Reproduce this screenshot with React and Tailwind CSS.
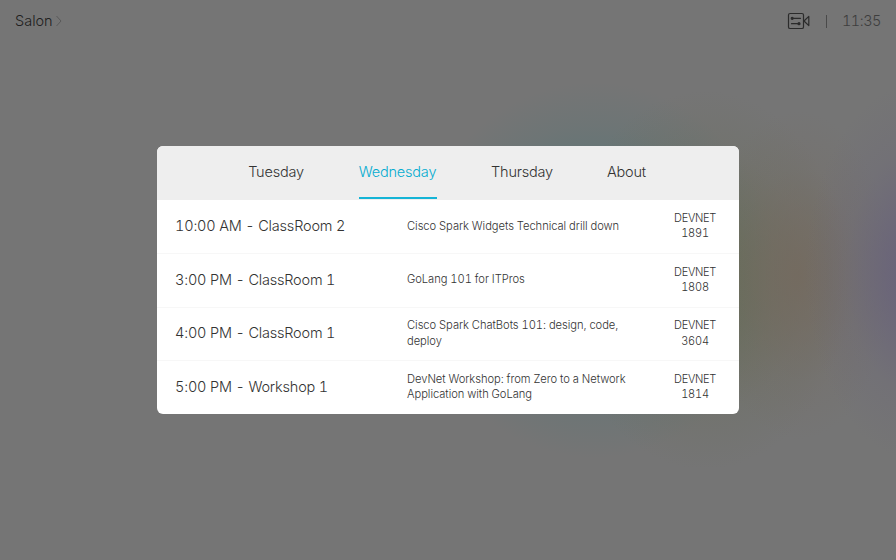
const tabs = [
  { name: "Tuesday", box: "w-[55px]" },
  { name: "Wednesday", box: "w-[78px]", active: true },
  { name: "Thursday", box: "w-[61px]" },
  { name: "About", box: "w-[38px]" },
];

const sessions = [
  { slot: "10:00 AM - ClassRoom 2", title: ["Cisco Spark Widgets Technical drill down"], code: "1891" },
  { slot: "3:00 PM - ClassRoom 1", title: ["GoLang 101 for ITPros"], code: "1808" },
  { slot: "4:00 PM - ClassRoom 1", title: ["Cisco Spark ChatBots 101: design, code,", "deploy"], code: "3604" },
  { slot: "5:00 PM - Workshop 1", title: ["DevNet Workshop: from Zero to a Network", "Application with GoLang"], code: "1814" },
];

function CameraIcon() {
  return (
    <svg className="mt-px" width="24" height="18" viewBox="0 0 24 18" fill="none" stroke="#2b2b2b" strokeWidth="1.2" strokeLinecap="round" strokeLinejoin="round">
      <rect x="1.5" y="1.5" width="15" height="15" rx="1.6" />
      <path d="M17 9 L21.8 4.4 V13.6 Z" />
      <path d="M6.5 6.3 H13.5 M4.5 11.7 H10.5" />
      <circle cx="5.2" cy="6.3" r="1" fill="#2b2b2b" />
      <circle cx="12" cy="11.7" r="1" fill="#2b2b2b" />
    </svg>
  );
}

function TopBar() {
  return (
    <header className="flex h-[41px] items-center justify-between pl-[15px] pr-[15px]">
      <div className="flex items-center text-[14.5px] text-[#202020]">
        <span>Salon</span>
        <svg className="ml-[3px] mt-px" width="6" height="12" viewBox="0 0 6 12" fill="none" stroke="#5a5a5a">
          <path d="M0.5 1 L5 6 L0.5 11" />
        </svg>
      </div>
      <div className="flex items-center">
        <CameraIcon />
        <span className="ml-[15px] mt-px h-[13px] w-px bg-[#4a4a4a]" />
        <span className="ml-[15px] mt-px w-[39px] text-[14.5px] tracking-[-0.035em] text-[#3e3e3e]">11:35</span>
      </div>
    </header>
  );
}

function Session({ slot, title, code }) {
  return (
    <li className="flex flex-1 items-center border-t border-[#f7f7f7] pl-[18px] first:border-transparent">
      <span className="w-[232px] pb-[2px] text-[14.5px] tracking-[-0.013em]">{slot}</span>
      <span className="flex w-[250px] flex-col pb-px text-[11.2px] leading-[15.4px] tracking-[-0.005em]">
        {title.map((line) => (
          <span key={line}>{line}</span>
        ))}
      </span>
      <span className="flex w-[76px] flex-col pb-px text-center text-[11px] leading-[15.4px]">
        <span className="tracking-[-0.03em]">DEVNET</span>
        <span className="tracking-[-0.02em]">{code}</span>
      </span>
    </li>
  );
}

export default function App() {
  return (
    <div className="h-[560px] w-[896px] overflow-hidden bg-[#757575] bg-[radial-gradient(ellipse_115px_190px_at_920px_272px,#67607a_0%,#67607aaa_30%,#67607a33_65%,transparent_100%),radial-gradient(ellipse_95px_165px_at_798px_275px,#74695dd0_0%,#74695d90_30%,#74695d30_65%,transparent_100%),radial-gradient(ellipse_145px_190px_at_705px_280px,#666b55_0%,#666b55a0_35%,#666b5530_70%,transparent_100%),radial-gradient(ellipse_180px_188px_at_595px_270px,#507577_0%,#507577a0_45%,#50757733_77%,transparent_100%)] font-['Inter','Liberation_Sans',sans-serif] font-light tabular-nums text-[#333333]">
      <TopBar />
      <main className="flex justify-center pt-[105px]">
        <section className="flex h-[268px] w-[582px] flex-col overflow-hidden rounded-md bg-white">
          <nav className="flex h-[53.5px] gap-[55px] bg-[#eeeeee] pb-px pl-[91.5px]">
            {tabs.map(({ name, box, active }) => (
              <button
                key={name}
                className={`${box} flex items-center justify-center whitespace-nowrap border-b-2 pt-px text-[14.5px] tracking-[-0.014em] ${active ? "border-[#14b4d6] text-[#04acd0]" : "border-transparent"}`}
              >
                {name}
              </button>
            ))}
          </nav>
          <ul className="flex flex-1 flex-col">
            {sessions.map((session) => (
              <Session key={session.slot} {...session} />
            ))}
          </ul>
        </section>
      </main>
    </div>
  );
}
